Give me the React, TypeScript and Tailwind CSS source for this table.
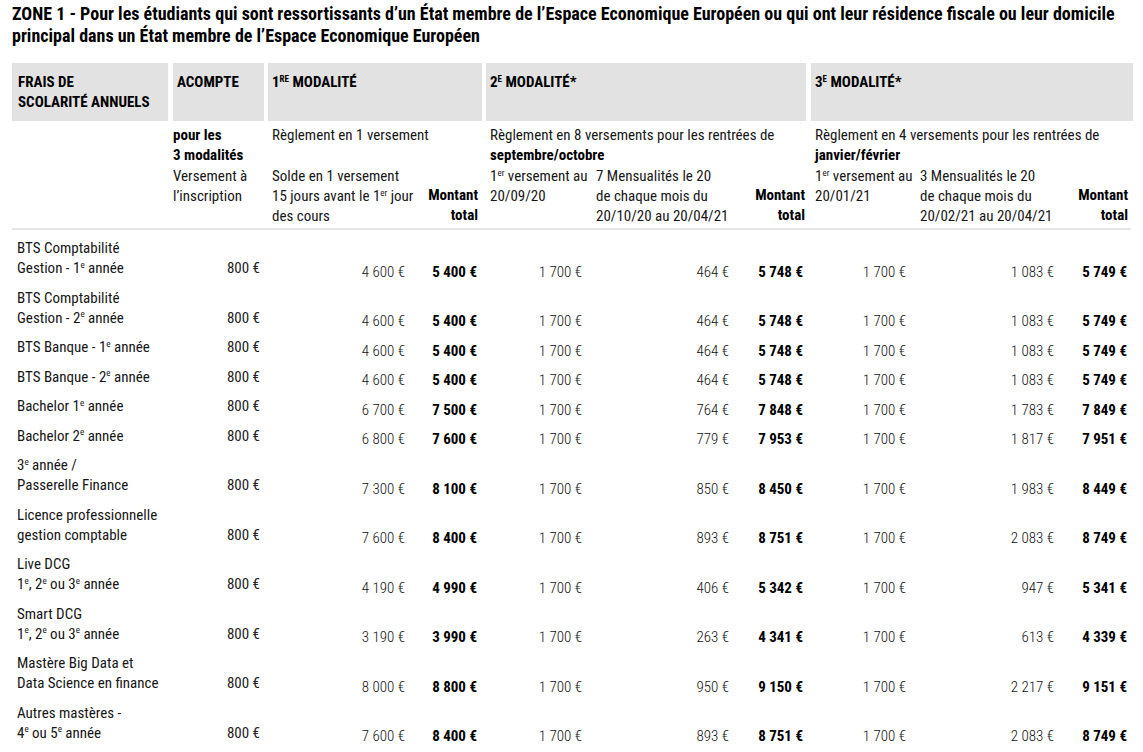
import React from 'react';

type Row = {
  label: React.ReactNode;
  a: string;
  m1: string;
  t1: string;
  v2: string;
  m2: string;
  t2: string;
  v3: string;
  m3: string;
  t3: string;
};

const e = (n: string) => n.replace(' ', '\u00a0') + '\u00a0€';

const Sup = ({ children }: { children: React.ReactNode }) => (
  <sup className="text-[9px] top-[-0.6em]">{children}</sup>
);

const rows: Row[] = [
  {
    label: (
      <>
        BTS Comptabilité
        <br />
        Gestion - 1<Sup>e</Sup> année
      </>
    ),
    a: '800', m1: '4 600', t1: '5 400', v2: '1 700', m2: '464', t2: '5 748', v3: '1 700', m3: '1 083', t3: '5 749',
  },
  {
    label: (
      <>
        BTS Comptabilité
        <br />
        Gestion - 2<Sup>e</Sup> année
      </>
    ),
    a: '800', m1: '4 600', t1: '5 400', v2: '1 700', m2: '464', t2: '5 748', v3: '1 700', m3: '1 083', t3: '5 749',
  },
  {
    label: (
      <>
        BTS Banque - 1<Sup>e</Sup> année
      </>
    ),
    a: '800', m1: '4 600', t1: '5 400', v2: '1 700', m2: '464', t2: '5 748', v3: '1 700', m3: '1 083', t3: '5 749',
  },
  {
    label: (
      <>
        BTS Banque - 2<Sup>e</Sup> année
      </>
    ),
    a: '800', m1: '4 600', t1: '5 400', v2: '1 700', m2: '464', t2: '5 748', v3: '1 700', m3: '1 083', t3: '5 749',
  },
  {
    label: (
      <>
        Bachelor 1<Sup>e</Sup> année
      </>
    ),
    a: '800', m1: '6 700', t1: '7 500', v2: '1 700', m2: '764', t2: '7 848', v3: '1 700', m3: '1 783', t3: '7 849',
  },
  {
    label: (
      <>
        Bachelor 2<Sup>e</Sup> année
      </>
    ),
    a: '800', m1: '6 800', t1: '7 600', v2: '1 700', m2: '779', t2: '7 953', v3: '1 700', m3: '1 817', t3: '7 951',
  },
  {
    label: (
      <>
        3<Sup>e</Sup> année /
        <br />
        Passerelle Finance
      </>
    ),
    a: '800', m1: '7 300', t1: '8 100', v2: '1 700', m2: '850', t2: '8 450', v3: '1 700', m3: '1 983', t3: '8 449',
  },
  {
    label: (
      <>
        Licence professionnelle
        <br />
        gestion comptable
      </>
    ),
    a: '800', m1: '7 600', t1: '8 400', v2: '1 700', m2: '893', t2: '8 751', v3: '1 700', m3: '2 083', t3: '8 749',
  },
  {
    label: (
      <>
        Live DCG
        <br />
        1<Sup>e</Sup>, 2<Sup>e</Sup> ou 3<Sup>e</Sup> année
      </>
    ),
    a: '800', m1: '4 190', t1: '4 990', v2: '1 700', m2: '406', t2: '5 342', v3: '1 700', m3: '947', t3: '5 341',
  },
  {
    label: (
      <>
        Smart DCG
        <br />
        1<Sup>e</Sup>, 2<Sup>e</Sup> ou 3<Sup>e</Sup> année
      </>
    ),
    a: '800', m1: '3 190', t1: '3 990', v2: '1 700', m2: '263', t2: '4 341', v3: '1 700', m3: '613', t3: '4 339',
  },
  {
    label: (
      <>
        Mastère Big Data et
        <br />
        Data Science en finance
      </>
    ),
    a: '800', m1: '8 000', t1: '8 800', v2: '1 700', m2: '950', t2: '9 150', v3: '1 700', m3: '2 217', t3: '9 151',
  },
  {
    label: (
      <>
        Autres mastères -
        <br />
        4<Sup>e</Sup> ou 5<Sup>e</Sup> année
      </>
    ),
    a: '800', m1: '7 600', t1: '8 400', v2: '1 700', m2: '893', t2: '8 751', v3: '1 700', m3: '2 083', t3: '8 749',
  },
];

const cols =
  'grid grid-cols-[158px_96px_154px_64px_110px_154px_61px_109px_152px_63px] items-end';

const Montant = ({ pr }: { pr: string }) => (
  <div className={`text-right font-bold text-black pb-[1px] ${pr}`}>
    Montant
    <br />
    total
  </div>
);

export default function App() {
  return (
    <div className="w-[1143px] h-[752px] overflow-hidden bg-white px-[12px] pt-[3px] text-[15px] leading-[20px] text-[#161616] font-['Liberation_Sans_Narrow','Roboto_Condensed','DejaVu_Sans_Condensed','Arial_Narrow',sans-serif]">
      <h1 className="text-[18px] leading-[22px] font-bold text-black">
        ZONE 1 - Pour les étudiants qui sont ressortissants d’un État membre de l’Espace Economique Européen ou qui ont leur résidence fiscale ou leur domicile
        <br />
        principal dans un État membre de l’Espace Economique Européen
      </h1>

      <div className="mt-[16px] flex gap-[5px] font-bold text-black uppercase">
        <div className="w-[156px] h-[58px] bg-[#e2e2e2] pl-[6px] pt-[9px] shrink-0">
          Frais de
          <br />
          scolarité annuels
        </div>
        <div className="w-[91px] h-[58px] bg-[#e2e2e2] pl-[4px] pt-[9px] shrink-0">Acompte</div>
        <div className="w-[214px] h-[58px] bg-[#e2e2e2] pl-[4px] pt-[9px] shrink-0 ml-[-1px]">
          1<Sup>re</Sup> modalité
        </div>
        <div className="w-[320px] h-[58px] bg-[#e2e2e2] pl-[4px] pt-[9px] shrink-0 ml-[-1px]">
          2<Sup>e</Sup> modalité*
        </div>
        <div className="w-[322px] h-[58px] bg-[#e2e2e2] pl-[4px] pt-[9px] shrink-0">
          3<Sup>e</Sup> modalité*
        </div>
      </div>

      <div className="border-b-2 border-[#e6e6e6] pb-[2px]">
        <div className={`${cols} items-start pt-[4px]`}>
          <div />
          <div className="pl-[3px] font-bold text-black">
            pour les
            <br />
            3 modalités
          </div>
          <div className="col-span-2 pl-[6px]">Règlement en 1 versement</div>
          <div className="col-span-3 pl-[6px]">
            Règlement en 8 versements pour les rentrées de
            <br />
            <span className="font-bold text-black">septembre/octobre</span>
          </div>
          <div className="col-span-3 pl-[6px]">
            Règlement en 4 versements pour les rentrées de
            <br />
            <span className="font-bold text-black">janvier/février</span>
          </div>
        </div>
        <div className={`${cols} mt-[1px]`}>
          <div />
          <div className="pl-[3px] self-start">
            Versement à
            <br />
            l’inscription
          </div>
          <div className="pl-[6px]">
            Solde en 1 versement
            <br />
            15 jours avant le 1<Sup>er</Sup> jour
            <br />
            des cours
          </div>
          <Montant pr="pr-[6px]" />
          <div className="pl-[6px] self-start">
            1<Sup>er</Sup> versement au
            <br />
            20/09/20
          </div>
          <div className="pl-[2px]">
            7 Mensualités le 20
            <br />
            de chaque mois du
            <br />
            20/10/20 au 20/04/21
          </div>
          <Montant pr="pr-[4px]" />
          <div className="pl-[6px] self-start">
            1<Sup>er</Sup> versement au
            <br />
            20/01/21
          </div>
          <div className="pl-[2px]">
            3 Mensualités le 20
            <br />
            de chaque mois du
            <br />
            20/02/21 au 20/04/21
          </div>
          <Montant pr="pr-[5px]" />
        </div>
      </div>

      <div className="pt-[2px]">
        {rows.map((r, i) => (
          <div key={i} className={cols}>
            <div className="pl-[5px] pt-[6px] pb-[3.5px]">{r.label}</div>
            <div className="text-right pr-[6px] pb-[3.5px] text-[#222]">{e(r.a)}</div>
            <div className="text-right pr-[15px] font-light text-[#111]">{e(r.m1)}</div>
            <div className="text-right pr-[7px] font-bold text-black">{e(r.t1)}</div>
            <div className="text-right pr-[12px] font-light text-[#111]">{e(r.v2)}</div>
            <div className="text-right pr-[19px] font-light text-[#111]">{e(r.m2)}</div>
            <div className="text-right pr-[6px] font-bold text-black">{e(r.t2)}</div>
            <div className="text-right pr-[12px] font-light text-[#111]">{e(r.v3)}</div>
            <div className="text-right pr-[16px] font-light text-[#111]">{e(r.m3)}</div>
            <div className="text-right pr-[6px] font-bold text-black">{e(r.t3)}</div>
          </div>
        ))}
      </div>
    </div>
  );
}
